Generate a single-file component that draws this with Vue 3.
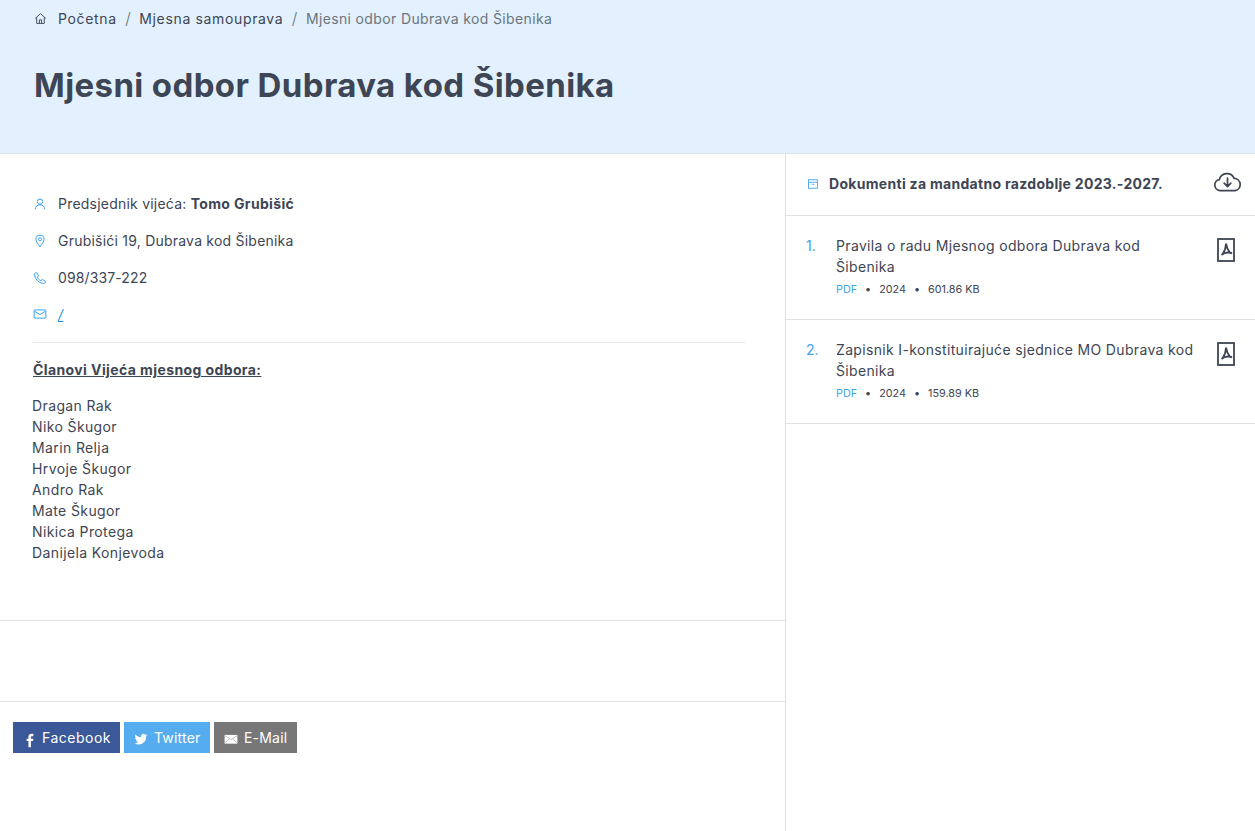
<script setup>
const members = ['Dragan Rak','Niko Škugor','Marin Relja','Hrvoje Škugor','Andro Rak','Mate Škugor','Nikica Protega','Danijela Konjevoda']
const docs = [
  { n: '1.', title: 'Pravila o radu Mjesnog odbora Dubrava kod Šibenika', year: '2024', size: '601.86 KB' },
  { n: '2.', title: 'Zapisnik I-konstituirajuće sjednice MO Dubrava kod Šibenika', year: '2024', size: '159.89 KB' }
]
</script>

<template>
  <div class="page">
    <header class="hero">
      <nav class="crumbs">
        <svg class="home" viewBox="0 0 24 24" fill="none" stroke="currentColor" stroke-width="1.700" stroke-linejoin="round"><path d="M2 12 12 3l10 9M5 10v11h14V10M10 21v-6.500h4V21"/></svg>
        <a class="lnk">Početna</a><span class="sep">/</span>
        <a class="lnk">Mjesna samouprava</a><span class="sep">/</span>
        <span class="cur">Mjesni odbor Dubrava kod Šibenika</span>
      </nav>
      <h1>Mjesni odbor Dubrava kod Šibenika</h1>
    </header>
    <div class="cols">
      <main class="left">
        <section class="info">
          <div class="row">
            <svg viewBox="0 0 24 24" class="ic"><circle cx="12" cy="8" r="4.500"/><path d="M4 21c0-5 3.500-7.500 8-7.500s8 2.500 8 7.500"/></svg>
            <span>Predsjednik vijeća: <b>Tomo Grubišić</b></span>
          </div>
          <div class="row">
            <svg viewBox="0 0 24 24" class="ic"><path d="M12 22c-3-4.500-7-9-7-13a7 7 0 0 1 14 0c0 4-4 8.500-7 13z"/><circle cx="12" cy="9" r="2.500"/></svg>
            <span>Grubišići 19, Dubrava kod Šibenika</span>
          </div>
          <div class="row">
            <svg viewBox="0 0 24 24" class="ic"><path d="M6 2.500 9.500 8 7.500 10.500c1 3 3 5 6 6L16 14.500l5.500 3.500c-.5 2.500-2.500 4-4.500 3.500C9.500 20 4 14.500 2.500 7 2 5 3.500 3 6 2.500z"/></svg>
            <span class="phone">098/337-222</span>
          </div>
          <div class="row last">
            <svg viewBox="0 0 24 24" class="ic"><rect x="2" y="5" width="20" height="14" rx="1"/><path d="m2.500 7 9.500 6 9.500-6"/></svg>
            <a class="mail">/</a>
          </div>
        </section>
        <section class="members">
          <p class="mtitle">Članovi Vijeća mjesnog odbora:</p>
          <p class="mlist"><template v-for="m in members" :key="m">{{ m }}<br></template></p>
        </section>
        <div class="blank"></div>
        <div class="share">
          <a class="btn fb">
            <svg viewBox="6 0 13 24" class="fbi"><path fill="#fff" d="M14 23V13h3.500l.5-4h-4V7c0-1.200.5-2 2-2h2V1.500C17.500 1.300 16.500 1 15 1c-3 0-5 2-5 5v3H7v4h3v10z"/></svg>
            Facebook
          </a>
          <a class="btn tw">
            <svg viewBox="0 0 24 24" class="bi low"><path fill="#fff" d="M23 5.500c-.8.400-1.700.600-2.600.700.900-.600 1.600-1.400 2-2.500-.9.500-1.800.900-2.900 1.100A4.500 4.500 0 0 0 11.800 9C8 8.800 4.700 7 2.500 4.200c-1.200 2-.6 4.600 1.400 6-.7 0-1.400-.2-2-.6 0 2.200 1.500 4.100 3.600 4.500-.7.200-1.400.200-2 .1.600 1.800 2.200 3.100 4.200 3.100A9 9 0 0 1 1 19.200 12.800 12.800 0 0 0 20.700 8c.9-.6 1.700-1.500 2.300-2.500z"/></svg>
            Twitter
          </a>
          <a class="btn em">
            <svg viewBox="0 0 24 24" class="bi low"><rect x="1" y="5" width="22" height="15" fill="#fff"/><path d="m1 6 11 7 11-7M1 19l8-7M23 19l-8-7" fill="none" stroke="#999" stroke-width="1"/></svg>
            E-Mail
          </a>
        </div>
      </main>
      <aside class="right">
        <div class="dhead">
          <svg viewBox="0 0 24 24" class="ic"><rect x="3" y="3.500" width="18" height="17"/><path d="M3 8.500h18M9.500 12.500h5"/></svg>
          <strong>Dokumenti za mandatno razdoblje 2023.-2027.</strong>
          <svg class="cloud" viewBox="0 0 30 22" fill="none" stroke="#3e4554" stroke-width="1.800" stroke-linecap="round" stroke-linejoin="round"><path d="M8 20.500H7A5.800 5.800 0 0 1 6.500 9 8.200 8.200 0 0 1 22 7.800a6.400 6.400 0 0 1 1 12.700h-15z"/><path d="M15 7.500v8.500M11.500 12.800 15 16.300l3.500-3.500"/></svg>
        </div>
        <div v-for="d in docs" :key="d.n" class="doc">
          <span class="num">{{ d.n }}</span>
          <div class="dbody">
            <div class="dtitle">{{ d.title }}</div>
            <div class="meta"><span class="pdf">PDF</span><i>•</i><span>{{ d.year }}</span><i>•</i><span>{{ d.size }}</span></div>
          </div>
          <svg class="pdficon" viewBox="0 0 18 24"><rect x="1" y="1" width="16" height="22" fill="none" stroke="#3e4554" stroke-width="1.800"/><path d="M9 5.500c.6 3.500 2 6.500 3.500 8.500l2.500 1.500M9 5.500c0 3.500-1.500 8-3.500 11M4.500 17c2-2 5.500-3.200 10.500-2" fill="none" stroke="#3e4554" stroke-width="1.800"/></svg>
        </div>
      </aside>
    </div>
  </div>
</template>

<style>
html, body { margin: 0; background: #fff; }
</style>

<style scoped>
.page { width: 1255px; height: 831px; overflow: hidden; font-family: "Inter", "Noto Sans", sans-serif; color: #3e4554; font-size: 14px; letter-spacing: .3px; }
.hero { height: 154px; box-sizing: border-box; background: #e2f1fd; border-bottom: 1px solid #dfe3e6; padding: 8px 34px 0; }
.crumbs { display: flex; align-items: center; height: 20px; font-size: 14px; color: #3e4554; }
.home { width: 13px; height: 13px; margin-right: 11px; }
.lnk { letter-spacing: .65px; }
.sep { color: #6c757d; margin: 0 8.500px; font-size: 16px; font-weight: 300; letter-spacing: 0; }
.cur { color: #6c757d; letter-spacing: .36px; }
h1 { margin: 37px 0 0; font-size: 33px; line-height: 40px; font-weight: 700; color: #3e4554; letter-spacing: .39px; }
.cols { display: grid; grid-template-columns: 786px 469px; height: 677px; }
.left { border-right: 1px solid #dfe3e6; }
.info { margin: 0 40px 0 33px; padding: 31px 0 0; border-bottom: 1px solid #e5e7e9; height: 189px; box-sizing: border-box; }
.row { display: flex; align-items: center; gap: 11px; height: 37px; letter-spacing: .22px; }
.row b { letter-spacing: .35px; }
.phone { letter-spacing: .12px; }
.last { height: 36px; }
.ic { width: 14px; height: 14px; flex: none; fill: none; stroke: #3aa0f0; stroke-width: 1.700; }
.mail { color: #1f8fe6; font-style: italic; text-decoration: underline; }
.members { padding: 16px 33px 0; height: 278px; box-sizing: border-box; border-bottom: 1px solid #dfe3e6; }
.mtitle { margin: 0 0 15px; font-weight: 700; text-decoration: underline; line-height: 21px; letter-spacing: .4px; }
.mlist { margin: 0 0 0 -1px; line-height: 21px; letter-spacing: .38px; }
.blank { height: 80px; border-bottom: 1px solid #dfe3e6; }
.share { display: flex; gap: 4px; padding: 20px 13px; }
.btn { display: flex; align-items: center; gap: 6px; height: 31px; padding-bottom: 1px; color: #fff; font-size: 14px; box-sizing: border-box; letter-spacing: .2px; }
.bi { width: 14px; height: 14px; }
.low { margin-top: 4px; }
.fbi { width: 8px; height: 15px; margin: 6px 2px 0 0; }
.fb { background: #3b5998; width: 107px; padding-left: 13px; letter-spacing: .5px; }
.tw { background: #55acee; width: 86px; padding-left: 10px; }
.em { background: #777; width: 83px; padding-left: 10px; }
.dhead { display: flex; align-items: center; height: 62px; box-sizing: border-box; padding: 0 13px 2px 21px; border-bottom: 1px solid #dfe3e6; }
.dhead .ic { width: 12px; height: 12px; margin-right: 10px; }
.dhead strong { flex: 1; font-size: 14px; font-weight: 700; }
.cloud { width: 29px; height: 21px; margin-bottom: 4px; }
.doc { display: flex; height: 104px; box-sizing: border-box; padding: 19px 20px 0 20px; border-bottom: 1px solid #dfe3e6; }
.num { width: 30px; color: #41a4ef; line-height: 21px; letter-spacing: 0; }
.dbody { flex: 1; }
.dtitle { line-height: 21px; width: 360px; letter-spacing: .34px; }
.meta { display: flex; gap: 8px; font-size: 10.800px; line-height: 16px; margin-top: 5px; letter-spacing: 0; }
.meta i { font-style: normal; }
.pdf { color: #41a4ef; }
.pdficon { width: 18px; height: 24px; margin-top: 3px; }
</style>
